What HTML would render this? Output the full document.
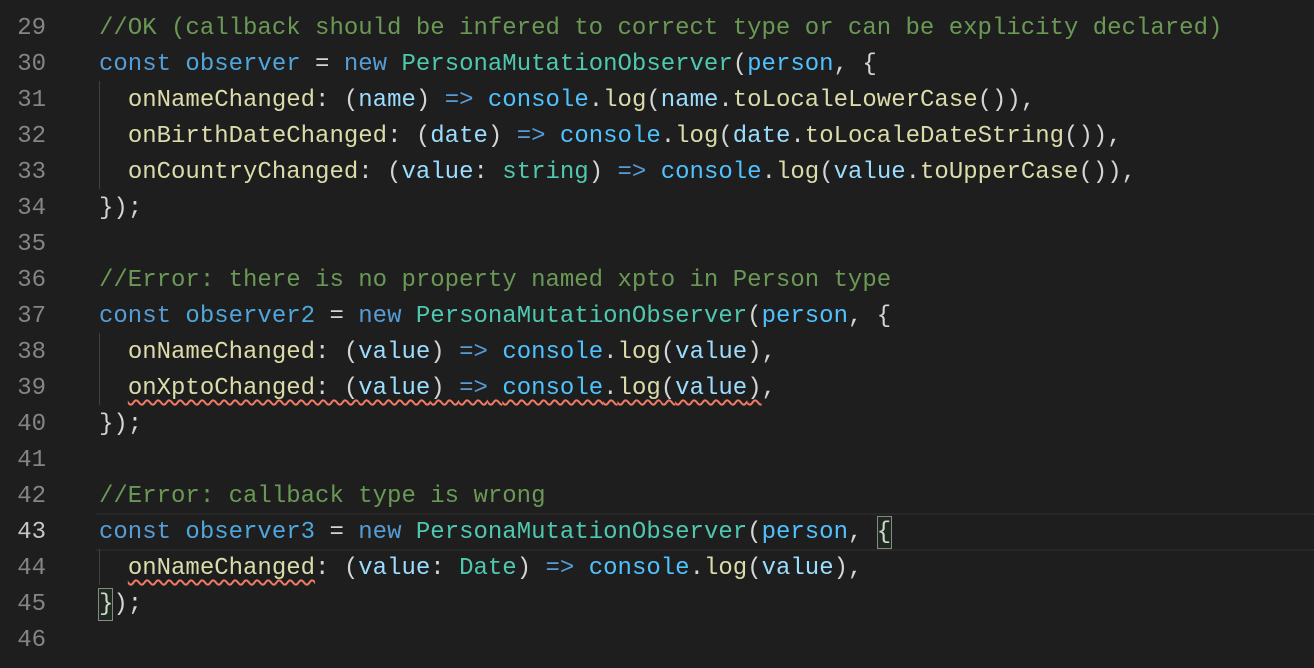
<!DOCTYPE html>
<html><head><meta charset="utf-8"><style>
body{margin:0;background:#1e1e1e;width:1314px;height:668px;overflow:hidden;position:relative;font-family:"Liberation Mono",monospace;font-size:24px;}
.ln{position:absolute;left:0;width:46px;text-align:right;color:#858585;height:36px;line-height:36px;padding-top:2px}
.c{position:absolute;left:99px;white-space:pre;color:#d4d4d4;height:36px;line-height:36px;padding-top:2px}
.cm{color:#6a9955}.k{color:#569cd6}.v{color:#4fa6dc}.cl{color:#4ec9b0}.f{color:#dcdcaa}.p{color:#9cdcfe}.pr{color:#4fc1ff}
.sq{text-decoration:underline wavy #f07a62;text-decoration-thickness:1.5px;text-underline-offset:5px}
.g{position:absolute;left:99px;width:1px;background:#404040}
.hl{position:absolute;left:96px;right:0;top:513px;height:34px;border-top:2px solid #282828;border-bottom:2px solid #282828}
.bm{position:absolute;width:13px;height:31px;border:1px solid #888;background:#1f2a1f}
</style></head><body>
<div class="hl"></div>
<div class="g" style="top:81px;height:108px"></div>
<div class="g" style="top:333px;height:72px"></div>
<div class="g" style="top:549px;height:36px"></div>
<div class="bm" style="left:877px;top:516px"></div>
<div class="bm" style="left:98px;top:588px"></div>

<div class="ln" style="top:9px">29</div>
<div class="c" style="top:9px"><span class="cm">//OK (callback should be infered to correct type or can be explicity declared)</span></div>
<div class="ln" style="top:45px">30</div>
<div class="c" style="top:45px"><span class="k">const</span> <span class="v">observer</span> = <span class="k">new</span> <span class="cl">PersonaMutationObserver</span>(<span class="pr">person</span>, {</div>
<div class="ln" style="top:81px">31</div>
<div class="c" style="top:81px">  <span class="f">onNameChanged</span>: (<span class="p">name</span>) <span class="k">=&gt;</span> <span class="pr">console</span>.<span class="f">log</span>(<span class="p">name</span>.<span class="f">toLocaleLowerCase</span>()),</div>
<div class="ln" style="top:117px">32</div>
<div class="c" style="top:117px">  <span class="f">onBirthDateChanged</span>: (<span class="p">date</span>) <span class="k">=&gt;</span> <span class="pr">console</span>.<span class="f">log</span>(<span class="p">date</span>.<span class="f">toLocaleDateString</span>()),</div>
<div class="ln" style="top:153px">33</div>
<div class="c" style="top:153px">  <span class="f">onCountryChanged</span>: (<span class="p">value</span>: <span class="cl">string</span>) <span class="k">=&gt;</span> <span class="pr">console</span>.<span class="f">log</span>(<span class="p">value</span>.<span class="f">toUpperCase</span>()),</div>
<div class="ln" style="top:189px">34</div>
<div class="c" style="top:189px">});</div>
<div class="ln" style="top:225px">35</div>
<div class="ln" style="top:261px">36</div>
<div class="c" style="top:261px"><span class="cm">//Error: there is no property named xpto in Person type</span></div>
<div class="ln" style="top:297px">37</div>
<div class="c" style="top:297px"><span class="k">const</span> <span class="v">observer2</span> = <span class="k">new</span> <span class="cl">PersonaMutationObserver</span>(<span class="pr">person</span>, {</div>
<div class="ln" style="top:333px">38</div>
<div class="c" style="top:333px">  <span class="f">onNameChanged</span>: (<span class="p">value</span>) <span class="k">=&gt;</span> <span class="pr">console</span>.<span class="f">log</span>(<span class="p">value</span>),</div>
<div class="ln" style="top:369px">39</div>
<div class="c" style="top:369px">  <span class="sq"><span class="f">onXptoChanged</span>: (<span class="p">value</span>) <span class="k">=&gt;</span> <span class="pr">console</span>.<span class="f">log</span>(<span class="p">value</span>)</span>,</div>
<div class="ln" style="top:405px">40</div>
<div class="c" style="top:405px">});</div>
<div class="ln" style="top:441px">41</div>
<div class="ln" style="top:477px">42</div>
<div class="c" style="top:477px"><span class="cm">//Error: callback type is wrong</span></div>
<div class="ln" style="top:513px;color:#c6c6c6">43</div>
<div class="c" style="top:513px"><span class="k">const</span> <span class="v">observer3</span> = <span class="k">new</span> <span class="cl">PersonaMutationObserver</span>(<span class="pr">person</span>, {</div>
<div class="ln" style="top:549px">44</div>
<div class="c" style="top:549px">  <span class="f sq">onNameChanged</span>: (<span class="p">value</span>: <span class="cl">Date</span>) <span class="k">=&gt;</span> <span class="pr">console</span>.<span class="f">log</span>(<span class="p">value</span>),</div>
<div class="ln" style="top:585px">45</div>
<div class="c" style="top:585px">});</div>
<div class="ln" style="top:621px">46</div>
</body></html>
